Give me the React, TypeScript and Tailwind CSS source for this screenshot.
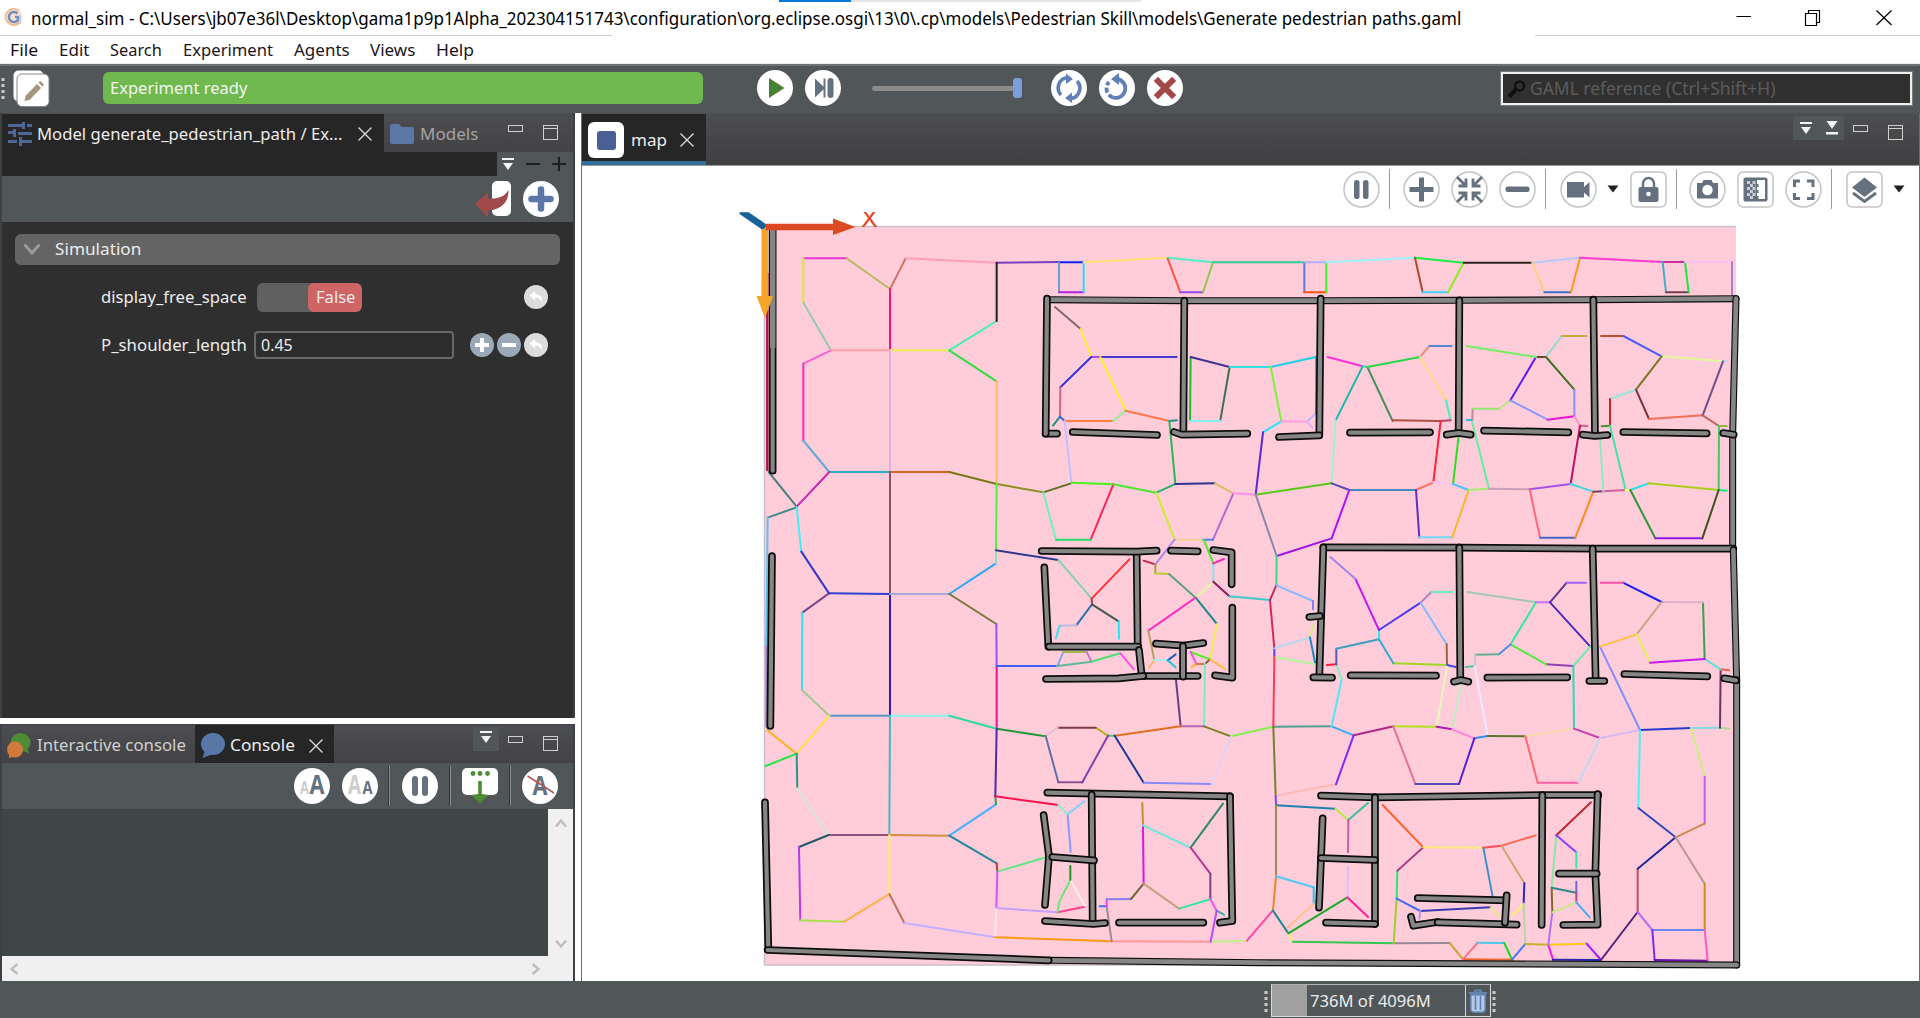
import { useLayoutEffect, useRef, type ReactNode } from "react";

/** Text condensed or widened so that it fills the width of its box. */
function Fit({ className = "", children }: { className?: string; children: string }) {
  const box = useRef<HTMLSpanElement>(null);
  const inner = useRef<HTMLSpanElement>(null);
  useLayoutEffect(() => {
    if (box.current && inner.current) {
      const s = box.current.clientWidth / inner.current.offsetWidth;
      inner.current.style.transform = `scaleX(${s})`;
    }
  }, []);
  return (
    <span ref={box} className={`block shrink-0 whitespace-nowrap leading-6 ${className}`}>
      <span ref={inner} className="inline-block origin-left">
        {children}
      </span>
    </span>
  );
}

function Round({ className = "", children }: { className?: string; children?: ReactNode }) {
  return (
    <span className={`block size-9 shrink-0 rounded-full bg-white ${className}`}>
      <svg viewBox="0 0 36 36" className="size-9 overflow-visible">
        {children}
      </svg>
    </span>
  );
}

function MapButton({ square, className = "", children }: { square?: boolean; className?: string; children?: ReactNode }) {
  return (
    <span className={`block size-[37px] shrink-0 ${className}`}>
      <svg viewBox="0 0 37 37" className="size-full" fill="#66717f">
        <rect x="1" y="1" width="35" height="35" rx={square ? 5 : 17.5} fill="#fff" stroke="#c4c4c4" strokeWidth="1.5" />
        {children}
      </svg>
    </span>
  );
}

function Cross({ className = "" }: { className?: string }) {
  return (
    <svg viewBox="0 0 14 14" className={`size-[14px] shrink-0 ${className}`}>
      <path d="M0.5 0.5 13.5 13.5M13.5 0.5 0.5 13.5" stroke="#d8d8d8" strokeWidth="1.4" />
    </svg>
  );
}

function MinIcon({ className = "" }: { className?: string }) {
  return <span className={`block h-[7px] w-[15px] shrink-0 border-[1.5px] border-[#cfcfcf] ${className}`} />;
}

function MaxIcon({ className = "" }: { className?: string }) {
  return (
    <span className={`block h-[15px] w-[15px] shrink-0 border-[1.5px] border-[#cfcfcf] ${className}`}>
      <span className="mt-[2px] block h-px bg-[#cfcfcf]" />
    </span>
  );
}

function MenuIcon({ className = "" }: { className?: string }) {
  return (
    <svg viewBox="0 0 14 14" className={`size-[14px] shrink-0 ${className}`} fill="#f4f4f4">
      <path d="M1 1h12v2H1zM2 6h10L7 13z" />
    </svg>
  );
}

function Grip({ className = "" }: { className?: string }) {
  return (
    <svg viewBox="0 0 4 22" className={`h-[22px] w-1 shrink-0 ${className}`} fill="#cfcabf">
      <path d="M0.5 1h3v3h-3zM0.5 7h3v3h-3zM0.5 13h3v3h-3zM0.5 19h3v3h-3z" />
    </svg>
  );
}

function Sep({ className = "" }: { className?: string }) {
  return <span className={`block h-10 w-[2px] shrink-0 border-l border-[#333839] bg-[#8a8d8f] ${className}`} />;
}

const undoPath = "M5.5 10.5 11 6v3c5 0 7.500 3 7 8.500-1-3.500-3-4.800-7-4.800v3z";

/* ------------------------------------------------------------------ */
/* Map contents: each sheet lists its segments in thirds of a pixel.   */
/* A wall that starts with "t" has a thin outline.                     */
/* ------------------------------------------------------------------ */

type Sheet = { x: number; y: number; paths: string; walls: string };

const sheets: Sheet[] = [
  {
    x: 740,
    y: 200,
    paths: `e23ad8 190,175 320,175|b9bb62 320,175 450,267|cf7468 450,267 497,175|ff9fb5 497,175 770,188|7a3fc0 770,188 957,186
d8e840 190,175 190,308|96c8ba 190,308 273,451|ff5fd0 273,451 190,491|f92fb8 190,491 190,722|5fa8d8 190,722 268,816
ff9fa8 273,451 450,451|ff1078 450,267 450,451|e8f050 450,451 628,451|40f0b8 628,451 770,363|202020 770,188 770,363
30dd40 628,451 770,544|ffbb60 770,544 770,852|e0b0e0 450,451 450,816|30aac0 268,816 450,816|d86820 450,816 628,816
7a7a18 628,816 770,852|8f8f28 770,852 910,877|5f6f20 910,877 993,850|c828b0 268,816 170,920|508080 86,816 170,920`,
    walls: `98,84 98,812`,
  },
  {
    x: 1030,
    y: 230,
    paths: `1020f0 87,97 161,97|6a9ed0 87,97 87,187|b020e0 87,187 161,187|20e0f8 161,97 161,187|ffdd70 161,97 413,83
50eec0 413,83 548,97|ff5548 413,86 451,187|9048f0 451,187 519,187|90c850 519,187 549,97|30cc98 549,97 823,97
5878e0 823,97 823,187|ff5010 823,187 889,187|40f030 889,97 889,187|b0b0ff 823,97 889,97|a0f0f8 889,97 1155,83
806a70 75,231 152,297|f8f030 152,297 184,381|c040f0 184,381 211,381|4838d0 211,381 440,381|f8f028 211,381 287,542
3830e0 184,381 91,472|d06090 91,472 90,560|209088 90,560 69,587|4060d0 90,560 104,573|ff8040 104,573 250,573
90f090 250,573 287,542|ff7848 287,542 418,573|209090 418,573 441,571|28b858 418,573 436,760|c0c0ff 104,573 124,758
18c030 482,381 480,573|403090 482,381 599,411|407050 599,411 571,571|80f0f0 480,573 571,573|30e0e0 599,411 722,411
18d0e8 722,411 858,381|80f040 722,411 754,574|20e8f8 754,574 699,607|ffa0e0 754,574 831,575|c0b8ff 831,575 858,550
e0b0ff 831,575 847,593|40a0e0 858,381 858,550|5828d8 699,607 677,794|ff30d8 893,381 998,409|18b8a8 998,409 917,571
40d0c0 998,409 1012,411|489058 1012,411 1088,573|28d848 1012,411 1170,381|a0f0d0 917,571 905,760|48f020 124,758 250,763
f82858 250,763 182,929|70f0b8 40,787 78,929|28dd68 78,929 182,929|48e830 250,763 379,788|30b070 379,788 436,762
303090 436,762 555,760|d8c060 555,760 610,790|b868c8 610,790 549,929|c8f030 379,788 434,929|f0d090 434,929 520,929
5080f0 520,929 549,929|ff90e8 610,790 677,794|58c818 677,794 905,760|5848b0 905,760 958,780|4888c0 958,780 1158,780
b010f8 958,780 905,925|9f14e4 905,925 740,978|8888a8 677,794 740,978`,
    walls: `t56,209 463,212 872,212 1290,211|t1290,211 1690,209 2118,206|47,611 81,611|51,206 47,611|463,212 460,605|872,206 868,614|128,606 381,615|432,606 455,614 652,611|747,621 868,616`,
  },
  {
    x: 1380,
    y: 230,
    paths: `18f040 105,83 251,98|b04828 105,83 128,187|40d0f8 128,187 204,187|88f020 204,187 251,98|302020 251,98 457,98
b8c8ff 457,98 600,83|ffcc80 457,98 493,187|3870c8 493,187 573,187|ff9818 573,187 600,83|ff38d0 600,83 848,96
c83098 848,96 915,96|40b0c0 848,96 858,187|704050 858,187 926,187|18e840 915,96 926,187|ffc0f0 915,96 1056,96
a880c8 1056,96 1056,200|e89080 120,381 148,348|5888d0 148,348 215,348|ffd880 120,381 198,511|40f0c0 198,511 212,571
b05040 38,571 182,573|c04060 182,573 212,571|ff2040 182,573 160,757|ff7060 160,757 108,780|ffc0f0 160,757 219,762
28e020 219,762 237,610|50c0f8 219,762 266,780|6030c0 108,780 118,922|70d8f8 118,922 217,922|f8b828 217,922 266,780
a0f070 266,780 327,776|60f0a0 327,776 275,570|20c0e0 260,570 277,570|c08898 277,570 278,536|90e870 278,536 359,536
b8e880 359,536 391,511|6018f8 391,511 468,381|704040 468,381 498,381|70f060 260,348 468,381|90d8d0 498,381 545,318
c0b040 545,318 620,318|407028 498,381 583,479|8890ff 583,479 583,557|8898ff 391,511 503,569|e818d8 503,569 583,559
ff90d8 583,559 600,587|d06090 600,587 622,588|c01068 600,587 572,762|c8a0b8 327,776 449,778|a850e8 449,778 572,762
40d8e0 572,762 640,785|ff6878 449,778 480,923|4868c8 480,923 586,923|ff8820 586,923 640,785|803868 640,785 670,784
d060a0 670,784 737,780|90e8c0 670,784 660,620|b85030 663,318 730,318|4860f8 730,318 845,379|e0f8a0 845,379 1029,394
c0d0ff 1029,394 1042,394|787828 845,379 768,479|90e8d8 768,479 690,507|c02820 690,507 690,587|509030 665,589 690,587
40e0b0 690,587 737,780|803038 768,479 807,567|f07058 807,567 968,556|705088 968,556 1029,394|c06060 968,556 1017,588
90b840 1017,588 1040,588|48c860 1017,588 1016,780|10f080 1016,780 1040,782|ffff60 737,780 751,780|28e0e8 751,780 806,760
a8d018 806,760 1016,780|309838 751,780 826,925|9018f0 826,925 967,925|405020 967,925 1016,780`,
    walls: `t1068,206 1058,612 1058,945|238,211 236,605|640,209 645,612|-90,608 150,607|200,614 236,609 272,614|312,602 565,607|608,614 645,618 682,615|730,606 980,610|1030,609 1061,614`,
  },
  {
    x: 740,
    y: 460,
    paths: `408888 83,173 170,142|60c0f0 83,173 79,560|a080c0 79,560 79,800|40f0f8 170,142 184,275|3838c8 184,275 267,400
784890 267,400 187,458|30e0f0 187,458 186,690|a0c890 186,690 268,767|3040d0 267,400 450,402|5898c8 268,767 450,767
905070 450,36 450,402|3020b8 450,402 450,767|a8a8d8 450,402 628,402|28a8f8 628,402 768,310|90e0b8 768,310 768,271
50f040 768,271 770,72|787838 628,402 769,492|9058f8 769,492 770,618|f01090 770,618 770,806|4060f8 770,618 952,618
80f8f0 450,767 628,767|30d8a0 628,767 770,806|209838 770,806 916,829|303890 768,271 955,300|88d0b0 955,300 1055,416
ff3030 1055,416 1168,298|c03050 1055,416 1056,433|3070a8 1056,433 1009,496|c0b8e0 1009,496 959,497|40e0f0 959,497 947,536
405850 1056,433 1136,484|20e8f8 1136,484 1137,536|88a8e8 952,618 970,576|a0b850 970,576 1040,576|c878c0 1040,576 1055,605
60b898 952,618 1055,605|48e070 1055,605 1141,580|ff50e8 1141,580 1182,628|c82050 1211,302 1246,313|b088e8 1246,313 1304,239
a8a040 1246,313 1246,340|b8d030 1246,340 1287,342|60a080 1287,342 1367,413|e0f8a0 1367,413 1420,365|90e0e8 1420,365 1420,310
50e830 1420,310 1391,239|ff20c0 1420,310 1452,297|901860 1420,365 1468,409|40c8c8 1468,409 1590,420|208888 1367,413 1431,492
ff30c0 1367,413 1225,512|b8a060 1225,512 1243,600|ffb860 1243,600 1227,624|a8f0e8 1243,600 1283,601|2858c0 1283,601 1307,583
20c0e0 1283,601 1307,622|e8f050 1431,492 1410,598|50f020 1410,598 1352,576|ff50e0 1352,576 1369,612|ffb040 1369,612 1355,622
e07840 1369,612 1395,612|806040 1395,612 1410,598|ffb840 1410,598 1456,627|70f0c8 1395,612 1392,799|684080 1307,650 1322,799
b868b8 1322,799 1392,799|e07020 1322,799 1125,827|788020 1392,799 1473,829|80f050 1473,829 1600,800|40c880 1125,827 1104,827
c0b020 1104,827 1067,803|803848 1067,803 953,803|e0c0d0 953,803 916,829`,
    walls: `96,288 91,798|1190,283 1193,560|905,273 1190,275 1250,272|1293,272 1373,274|1420,270 1475,277 1475,373|913,322 925,560|927,560 1195,560|1197,570 1205,645|1210,648 1373,648|918,657 1135,655 1210,648|1248,551 1330,557 1390,549|1329,558 1329,650|1477,443 1477,653 1425,646`,
  },
  {
    x: 1020,
    y: 520,
    paths: `40d888 770,108 769,196|b83060 769,196 750,240|88b8ff 769,196 879,243|8080f0 879,243 879,268|d02868 750,240 763,385
5040f8 763,385 763,411|b0d8f0 763,385 870,352|d0f080 870,352 880,313|2088c0 870,352 886,432|b0f898 763,411 886,433
ff3858 763,411 760,620|50a090 760,620 935,619|788028 760,620 767,827|ffb8b8 767,827 948,793|38a8f0 935,619 1001,646
8828f8 1001,646 948,793|b02888 1001,646 1121,619|50e8f8 935,619 965,478|80f0c0 965,478 949,433|f81840 921,435 949,433
5858b0 949,433 949,386|38a0c0 949,386 1077,358|30e8f0 1077,358 1077,330|c818f0 1077,330 1006,176|a088e8 1006,176 931,111
6070a8 77,648 115,787|905098 115,787 187,787|8840a8 187,787 264,647|203898 284,647 371,788|8888f8 371,788 575,792
e0d0f8 575,792 633,649`,
    walls: `910,82 1318,83|1318,83 1718,86 2140,86|910,82 898,465|868,291 900,288|880,472 936,473|992,466 1248,467`,
  },
  {
    x: 1370,
    y: 520,
    paths: `5038f0 27,330 152,248|b080c8 152,248 184,216|68e8c0 184,216 247,216|88b8ff 152,248 230,373|906840 230,373 231,435
a0d820 231,435 70,430|38a8d0 70,430 27,358|4848e0 231,435 257,441|e8f8b8 231,440 200,620|a0c8b0 292,216 498,247
30e8a0 498,247 422,373|d070f8 498,247 540,247|603888 540,247 590,188|a060f8 590,188 648,188|5028c0 540,247 661,380
70e8a8 661,380 610,438|9040b0 610,438 528,433|58e840 528,433 422,373|5888f0 422,373 387,403|60b098 387,403 316,404
c0c8d0 316,404 314,438|50c8a0 288,441 314,438|f0e8ff 314,438 353,648|b8f0b8 273,495 246,628|b0e020 70,619 200,620
b020b0 200,620 246,628|ff80d8 246,628 313,655|3090f0 313,655 353,648|587830 353,648 466,649|f8d8b0 466,649 610,626
30d8b8 610,438 612,626|c840b0 612,626 690,654|d8b8f0 690,654 810,630|8090ff 690,380 810,630|2838d0 810,630 963,624
80d8e0 963,624 1050,623|b0d890 1050,623 1077,626|703068 1052,448 1050,623|f06040 1052,448 1077,451|60e0e0 1052,448 1004,417
38a050 1004,417 999,247|e0b0c8 999,247 875,246|2020f0 875,246 759,188|ff50a8 759,188 692,188|d0a088 875,246 800,343
ffc040 800,343 690,380|e0f050 800,343 840,428|c818f0 840,428 1004,417|e87098 70,619 136,792|5050b8 136,792 267,792
5820e0 267,792 313,655|ff6870 466,649 503,788|ff60a0 503,788 626,788|c0d8f0 626,788 690,654|48f0f8 810,630 805,864
c8f080 963,624 1004,770|c058f8 1004,770 1004,911`,
    walls: `268,83 271,478|668,86 677,478|252,485 273,480 295,485|352,473 592,472|658,483 703,483|763,462 1012,469|t1090,90 1100,480|t1100,480 1100,1335|1063,475 1098,481`,
  },
  {
    x: 740,
    y: 720,
    paths: `ffb020 81,30 170,101|ffe040 170,101 268,-13|20e840 77,138 170,101|309088 170,101 172,205|d0e8d8 172,205 266,345
48b8b8 450,-13 448,345|905078 266,345 448,345|d09040 448,345 628,347|48b0ff 628,347 768,253|30a060 768,253 766,229
5028a8 770,26 766,229|f81050 766,229 955,255|208898 628,347 770,430|b04040 770,430 772,455|60e880 772,455 918,412
d850f8 772,455 769,564|ffe8f0 769,564 766,652|c8a0f8 769,564 953,577|ff4098 953,577 1034,560|68e870 953,577 958,545 991,480
fff0f0 991,480 1035,557|189820 991,438 991,480|8898ff 983,283 992,395|90e8d0 955,255 983,283|80d0f8 983,283 1034,243
285868 266,345 177,381|b838f0 177,381 181,601|a8e050 181,601 313,605|ffb040 313,605 448,522|fff068 448,345 448,522
c07060 448,522 493,609|c0b0ff 493,609 766,652|ff9818 766,652 1115,664|ff9898 1115,664 1412,665|c0f088 1412,665 1521,662
ff48a8 1521,662 1598,572|a08898 1115,664 1100,559|3878f8 1079,559 1100,559|ff40e8 1100,559 1100,538|8080f0 1100,538 1173,537
706838 1173,537 1211,491|d818d8 1211,491 1209,316|c09030 1209,316 1207,249|68e8d8 1209,316 1352,383|308870 1352,383 1449,251
b83898 1352,383 1411,461|804078 1411,461 1411,538|30e8a0 1411,538 1317,566|c8a080 1317,566 1211,491|ff50e8 1411,538 1430,572
40b0a8 1430,572 1452,584|b848f8 1430,572 1412,665`,
    walls: `75,247 85,688|t926,721 1560,728 2990,735|83,690 926,721|922,218 1470,229|1470,229 1477,603 1440,608|1055,224 1058,600|911,285 927,408 915,555|937,411 1062,421|915,603 1060,612 1095,609|1137,608 1390,608`,
  },
  {
    x: 1240,
    y: 720,
    paths: `7848f8 107,227 108,256|2080b0 108,256 286,266|b8e840 286,266 325,300|38c0a0 325,300 384,249|c860a8 325,300 324,397
a08850 108,256 108,469|e88828 108,469 99,572|50c8f8 108,469 221,502|38c0e8 221,502 221,552|ffc090 221,552 137,627
208890 99,572 145,640|f8f070 145,640 158,665|20a828 145,640 322,532|d8c0f8 322,532 324,440|ff2098 322,532 384,591
30c850 158,665 461,670|988898 461,670 629,669|a0d030 461,670 470,536|30e078 470,536 472,452|a84088 472,452 550,382
ff6028 550,382 428,255|ffe880 550,382 730,383|ff4858 730,383 785,377|ff6850 785,377 887,346|4090c8 730,383 758,530
d8a070 785,377 853,490|2828c8 853,490 851,551|f8f860 851,551 819,586|b0d8a8 851,551 856,672|4868f8 470,536 541,573
3838b0 541,573 752,562|b098f0 541,573 538,596|e0e880 752,562 774,587|d0a030 629,669 669,718|f06830 669,718 816,719
ff7088 669,718 713,668|48c8e8 713,668 793,669|18d820 793,669 816,719|4878f0 816,719 856,672|c8b030 856,672 925,674
ffc818 925,674 1040,671|f818e8 925,674 939,719|2828b0 939,719 1083,720|a818f8 1040,671 1083,720|b070f8 925,674 937,577
806828 937,577 935,503|88e8a0 935,503 949,346|c02830 949,346 1053,247|9838f8 949,346 1009,397|38e8b0 1009,397 1009,443
308888 935,503 1009,518|7068d8 1009,485 1009,518|b04890 1009,518 1009,547|c8e880 1009,547 937,577|48a8f8 1009,547 1049,592
582078 1083,720 1193,576|b85060 1193,576 1193,446|2028a0 1193,446 1307,352|3048b8 1307,352 1195,264|d08850 1307,352 1393,311
b89890 1307,352 1394,491|c89010 1394,491 1394,630|c068f8 1193,576 1237,630|6888f8 1237,630 1394,630|8028e8 1237,630 1244,720
7010b0 1244,720 1403,722|ff58c0 1394,630 1403,722`,
    walls: `243,227 405,232|405,232 905,225 1075,225|405,232 405,612|258,608 405,612|248,295 237,563|243,414 405,420|907,225 905,615|1073,222 1066,460 1073,614 970,615|957,461 1070,461|533,534 798,541|513,590 520,617 593,606|593,607 830,614|800,526 795,608`,
  },
];

function Wall({ spec }: { spec: string }) {
  const thin = spec.startsWith("t");
  const points = thin ? spec.slice(1) : spec;
  return (
    <g>
      <polyline points={points} stroke="#0c0c0c" strokeWidth={thin ? 21 : 23} />
      <polyline points={points} stroke="#868686" strokeWidth={thin ? 14 : 12.5} />
    </g>
  );
}

function FloorMap() {
  return (
    <svg viewBox="582 166 1337 814" className="col-start-1 row-start-1 h-[814px] w-[1337px]">
      <rect x="764.5" y="226.500" width="971.500" height="738.500" fill="#ffcdd9" />
      <path d="M1736 226.500H764.500V965H1400" fill="none" stroke="#c9bfc9" strokeWidth="1.500" />
      {sheets.map((s, i) => (
        <g key={i} transform={`translate(${s.x} ${s.y}) scale(0.33333)`} fill="none" strokeLinecap="round">
          {s.paths.split(/[|\n]/).map((p, j) => {
            const at = p.indexOf(" ");
            return <polyline key={j} points={p.slice(at + 1)} stroke={"#" + p.slice(0, at)} strokeWidth="6" strokeLinejoin="round" />;
          })}
        </g>
      ))}
      <path d="M767.300 273V471" stroke="#b5104e" strokeWidth="2.400" />
      {sheets.map((s, i) => (
        <g key={i} transform={`translate(${s.x} ${s.y}) scale(0.33333)`} fill="none" strokeLinecap="round" strokeLinejoin="round">
          {s.walls.split("|").map((w, j) => (
            <Wall key={j} spec={w} />
          ))}
        </g>
      ))}
      <path d="M772.700 229V348" stroke="#868686" strokeWidth="5.500" />
      <path d="M741 211 765 227.500" stroke="#17629a" strokeWidth="6.500" />
      <path d="M764.700 229V298" stroke="#f5a628" strokeWidth="6.500" />
      <path d="M756.500 296h16.500l-8 22z" fill="#f5a628" />
      <path d="M765.500 227H836" stroke="#dc4a22" strokeWidth="6.500" />
      <path d="M833 218.500 855.500 227 833 235z" fill="#dc4a22" />
      <path d="M735 200h20v12.200h-20z" fill="#fff" />
      <clipPath id="axisLabel">
        <path d="M850 212h40v30h-40z" />
      </clipPath>
      <g clipPath="url(#axisLabel)">
        <text x="861" y="227.200" fontSize="23" fontWeight="400" fontFamily="Inter, sans-serif" fill="#dc4a22" textLength="17" lengthAdjust="spacingAndGlyphs">
          X
        </text>
      </g>
    </svg>
  );
}

function MapToolbar() {
  return (
    <div className="col-start-1 row-start-1 flex h-[46px] items-center self-start pl-[761px]">
      <MapButton>
        <rect x="11" y="9" width="5.500" height="19" rx="2.500" />
        <rect x="20" y="9" width="5.500" height="19" rx="2.500" />
      </MapButton>
      <span className="ml-[9px] h-10 w-px bg-[#9a9a9a]" />
      <MapButton className="ml-[13px]">
        <path d="M16 6.500h5V16h9.500v5H21v9.500h-5V21H6.500v-5H16z" />
      </MapButton>
      <MapButton className="ml-[11px]">
        <path
          d="M6 6l9 9M15 7.500V15H7.500M31 6l-9 9M22 7.500V15h7.500M6 31l9-9M7.500 22H15v7.500M31 31l-9-9M29.500 22H22v7.500"
          fill="none"
          stroke="#66717f"
          strokeWidth="2.800"
        />
      </MapButton>
      <MapButton className="ml-[11px]">
        <rect x="6.500" y="15.500" width="24" height="5.500" rx="2" />
      </MapButton>
      <span className="ml-[9px] h-10 w-px bg-[#9a9a9a]" />
      <MapButton className="ml-[14px]">
        <path d="M7 11h17v5l5.500-5v15.500L24 21.500v5H7z" />
      </MapButton>
      <svg viewBox="0 0 12 8" className="ml-[10px] h-2 w-3">
        <path d="M0.500 0.500h11L6 7.500z" fill="#222" />
      </svg>
      <MapButton square className="ml-[11px]">
        <rect x="8.500" y="16" width="20" height="15" rx="2" />
        <path d="M13 17v-4.500a5.500 5.500 0 0 1 11 0V17" fill="none" stroke="#66717f" strokeWidth="2.400" />
        <circle cx="18.500" cy="23" r="2.300" fill="#fff" />
      </MapButton>
      <span className="ml-[9px] h-10 w-px bg-[#9a9a9a]" />
      <MapButton className="ml-[12px]">
        <path d="M8 12h5l1.500-3h8l1.500 3h5v15.500H8z" />
        <circle cx="18.500" cy="19" r="5.200" fill="#fff" />
      </MapButton>
      <MapButton square className="ml-[11px]">
        <rect x="6.500" y="6.500" width="24" height="24" rx="2" />
        <path d="M20 9h8v19h-8z" fill="#fff" />
        <path
          d="M10 10h3v3h-3zM15.500 10h3v3h-3zM13 13h3v3h-3zM18 13h3v3h-3zM10 16h3v3h-3zM15.500 16h3v3h-3zM13 19h3v3h-3zM18 19h3v3h-3zM10 22h3v3h-3zM15.500 22h3v3h-3zM13 25h3v3h-3z"
          fill="#c9ced3"
        />
        <path d="M18.500 13h3v3h-3zM18.500 19h3v3h-3zM18.500 25h3v3h-3z" />
      </MapButton>
      <MapButton className="ml-[11px]">
        <path d="M9.500 16V10H15M22 10h6v6M28 22v5.500h-6M15 27.500H9.500V22" fill="none" stroke="#66717f" strokeWidth="3" />
      </MapButton>
      <span className="ml-[9px] h-10 w-px bg-[#9a9a9a]" />
      <MapButton square className="ml-[14px]">
        <path d="M18.500 6.500 31 16.500 18.500 26 6 16.500z" />
        <path d="M7 22 18.500 30.500 30 22" fill="none" stroke="#66717f" strokeWidth="2.800" />
      </MapButton>
      <svg viewBox="0 0 12 8" className="ml-[10px] h-2 w-3">
        <path d="M0.500 0.500h11L6 7.500z" fill="#222" />
      </svg>
    </div>
  );
}

function TitleBar() {
  return (
    <>
      <div className="flex h-[2px] pl-[779px]">
        <span className="w-[72px] bg-[#0078d7]" />
        <span className="w-[290px] bg-[#e5e5e5]" />
      </div>
      <div className="flex h-[33px] items-center">
        <svg viewBox="0 0 20 20" className="mb-1 ml-1 size-5">
          <circle cx="10" cy="10" r="8.500" fill="#fbe3cf" />
          <path d="M15 4A8 8 0 1 0 17 13" fill="none" stroke="#eebd94" strokeWidth="2" />
          <path d="M13.500 6.500A5 5 0 1 0 14 13v-3h-3" fill="none" stroke="#6f8fbd" strokeWidth="2.500" />
          <path d="M16 8v9" stroke="#c3cfe2" strokeWidth="2" />
        </svg>
        <Fit className="mb-[2px] ml-[7px] w-[1430px] text-[17.5px] text-black">
          {"normal_sim - C:\\Users\\jb07e36l\\Desktop\\gama1p9p1Alpha_202304151743\\configuration\\org.eclipse.osgi\\13\\0\\.cp\\models\\Pedestrian Skill\\models\\Generate pedestrian paths.gaml"}
        </Fit>
        <svg viewBox="0 0 160 24" className="mb-[5px] ml-[272px] h-6 w-40" fill="none" stroke="#000" strokeWidth="1.200">
          <path d="M3.500 12.500H18M72.500 9.500h11v12h-11zM75.500 9V6.500h11v12h-3M143.500 6.500l15 14.500M158.500 6.500l-15 14.500" />
        </svg>
      </div>
      <div className="flex h-px justify-between">
        <span className="w-[612px] bg-[#cfcfcf]" />
        <span className="w-[385px] bg-[#cfcfcf]" />
      </div>
      <div className="flex h-7 items-center border-b border-[#ececec] pl-[10px] text-[17px] text-[#1b1420]">
        <Fit className="w-[28px]">File</Fit>
        <Fit className="ml-[21px] w-[30px]">Edit</Fit>
        <Fit className="ml-[21px] w-[52px]">Search</Fit>
        <Fit className="ml-[21px] w-[90px]">Experiment</Fit>
        <Fit className="ml-[21px] w-[56px]">Agents</Fit>
        <Fit className="ml-[20px] w-[45px]">Views</Fit>
        <Fit className="ml-[21px] w-[38px]">Help</Fit>
      </div>
    </>
  );
}

function MainToolbar() {
  return (
    <div className="flex h-[49px] items-center border-t-2 border-[#6f7375] pb-[3px]">
      <Grip className="ml-px" />
      <svg viewBox="0 0 37 37" className="ml-2 size-[37px]">
        <rect x="0.500" y="0.500" width="30" height="31" rx="5" fill="#fff" />
        <rect x="4" y="4" width="32" height="32.500" rx="5" fill="#fff" stroke="#858889" strokeWidth="1" />
        <path d="M11.500 31l1-5L24 14l4 4-11.500 12zM25.500 12.500l2-1.500 3.500 3.500-1.700 2z" fill="#a5937c" />
      </svg>
      <div className="ml-[53px] flex h-8 w-[600px] items-center rounded-md bg-[#70b94e] pl-[7px] text-[17px] text-[#f4f4f4]">
        <Fit className="w-[137px]">Experiment ready</Fit>
      </div>
      <Round className="ml-[54px]">
        <path d="M12 8l15.500 10L12 28z" fill="#478232" />
      </Round>
      <Round className="ml-3">
        <path d="M10 8.500 20 18 10 27.500z" fill="#66717f" />
        <rect x="18.500" y="8.500" width="2" height="19" fill="#66717f" />
        <rect x="22.500" y="8" width="6" height="20" rx="3" fill="#66717f" />
      </Round>
      <span className="ml-[31px] h-[5px] w-[141px] rounded-l-full bg-[#8b8b89]" />
      <span className="h-5 w-[9px] rounded-[3px] bg-[#7b9edb]" />
      <Round className="ml-[29px]">
        <path d="M20 28.500A10.500 10.500 0 0 0 26 11M16 7.500A10.500 10.500 0 0 0 10 25" fill="none" stroke="#5f7fb5" strokeWidth="3.600" />
        <path d="M15 3.500 22 9l-7 5zM21 22.500 14 28l7 5z" fill="#5f7fb5" />
      </Round>
      <Round className="ml-3">
        <path d="M18 9A9.500 9.500 0 1 1 14 27.500" fill="none" stroke="#5f7fb5" strokeWidth="3.800" />
        <path d="M14 27.500A9.500 9.500 0 0 1 10 12" fill="none" stroke="#5f7fb5" strokeWidth="3.800" strokeDasharray="5 2.500" />
        <path d="M20 3v12l-8-6z" fill="#5f7fb5" />
      </Round>
      <Round className="ml-3">
        <path d="M11 11 25 25M25 11 11 25" stroke="#a34848" strokeWidth="6" strokeLinecap="square" />
      </Round>
      <div className="ml-[318px] mt-px flex h-[33px] w-[411px] items-center border-2 border-[#f0f0ee] bg-[#303030] text-[17.5px] text-[#5c5c5c] outline outline-1 outline-[#777b7c]">
        <svg viewBox="0 0 20 20" className="ml-1 size-5 shrink-0" fill="none" stroke="#111">
          <circle cx="12.500" cy="7" r="4.500" strokeWidth="2.600" />
          <path d="M9 10.500 2 17.500" strokeWidth="4" />
        </svg>
        <Fit className="mb-px ml-[3px] w-[245px]">GAML reference (Ctrl+Shift+H)</Fit>
      </div>
    </div>
  );
}

function ParametersPanel() {
  return (
    <section className="flex h-[605px] flex-col border-x-2 border-[#3d4044] bg-[#2f2f2f]">
      <div className="flex h-[39px] items-center bg-linear-to-b from-[#4d4e51] to-[#434246] pt-px">
        <div className="flex h-full w-[382px] items-center bg-[#262626] pt-[2px] text-[17px] text-[#ececec]">
          <svg viewBox="0 0 24 24" className="ml-[6px] size-6" fill="#4e6796">
            <path d="M0 2h14V0h3v7h-3V5H0zM19 2h5v3h-5zM0 9h5V7h3v8H5v-3H0zM10 10h14v3H10zM0 18h9v3H0zM11 15h3v3h10v3H14v3h-3z" />
          </svg>
          <Fit className="ml-[5px] w-[305px]">Model generate_pedestrian_path / Ex...</Fit>
          <Cross className="ml-4" />
        </div>
        <svg viewBox="0 0 24 20" className="ml-[6px] mt-[2px] h-5 w-6" fill="#5b77a6">
          <path d="M0 2Q0 0 2 0h7l2.500 3H22q2 0 2 2v13q0 2-2 2H2q-2 0-2-2z" />
        </svg>
        <Fit className="ml-[6px] mt-[2px] w-[58px] text-[17px] text-[#a3a3a3]">Models</Fit>
        <MinIcon className="mb-[9px] ml-[30px]" />
        <MaxIcon className="mb-px ml-[20px]" />
      </div>
      <div className="flex h-6 items-center bg-[#515658]">
        <span className="h-full w-[495px] bg-[#262626]" />
        <MenuIcon className="ml-1" />
        <span className="ml-[11px] h-[2px] w-[14px] bg-[#1d1f20]" />
        <svg viewBox="0 0 14 14" className="ml-3 size-[14px]">
          <path d="M0 7h14M7 0v14" stroke="#1d1f20" strokeWidth="2" />
        </svg>
      </div>
      <div className="flex h-[46px] items-center justify-end bg-[#515658] pr-[14px]">
        <svg viewBox="0 0 36 36" className="size-9">
          <rect x="17" y="0" width="19" height="35" rx="5" fill="#fff" />
          <path d="M0 23 13 11v6.500c9 .5 16-1 20.500-8.500.5 12-7 20-20.500 20.500v7z" fill="#a14a4b" />
        </svg>
        <Round className="ml-3">
          <path d="M18 8.500v19M8.500 18h19" stroke="#5a77a8" strokeWidth="6.500" strokeLinecap="round" />
        </Round>
      </div>
      <div className="mx-[13px] mt-3 flex h-[31px] w-[545px] items-center rounded-md bg-[#646464] pb-px text-[17px] text-[#ececec]">
        <svg viewBox="0 0 18 12" className="ml-2 h-3 w-[18px]">
          <path d="M1.500 1.500 9 10l7.500-8.500" fill="none" stroke="#9c9c9c" strokeWidth="3" />
        </svg>
        <Fit className="ml-[14px] w-[86px]">Simulation</Fit>
      </div>
      <div className="mt-[17px] flex h-[30px] items-center pl-[99px] text-[17px] text-[#ececec]">
        <Fit className="w-[146px]">display_free_space</Fit>
        <div className="ml-[10px] flex h-[29px] w-[105px] justify-end overflow-hidden rounded-md bg-[#606060]">
          <div className="flex w-[54px] items-center justify-center rounded-md bg-[#cf6464] pb-px">
            <Fit className="w-[39px]">False</Fit>
          </div>
        </div>
        <svg viewBox="0 0 24 24" className="ml-[162px] size-6">
          <circle cx="12" cy="12" r="12" fill="#dcdcdc" />
          <path d={undoPath} fill="#fff" />
        </svg>
      </div>
      <div className="mt-[18px] flex h-[30px] items-center pl-[99px] text-[17px] text-[#ececec]">
        <Fit className="w-[146px]">P_shoulder_length</Fit>
        <div className="ml-[7px] flex h-7 w-[200px] items-center rounded-[4px] border-2 border-[#686868] bg-[#2d2d2d] pl-[5px]">
          <Fit className="w-[32px]">0.45</Fit>
        </div>
        <svg viewBox="0 0 78 24" className="ml-4 h-6 w-[78px]">
          <circle cx="12" cy="12" r="12" fill="#9aa8b7" />
          <circle cx="39" cy="12" r="12" fill="#9aa8b7" />
          <circle cx="66" cy="12" r="12" fill="#dcdcdc" />
          <path d="M12 5v14M5 12h14M32 12h14" stroke="#fff" strokeWidth="4" />
          <path d={undoPath} transform="translate(54 0)" fill="#fff" />
        </svg>
      </div>
    </section>
  );
}

function ConsolePanel() {
  return (
    <section className="mt-[6px] flex h-[257px] flex-col border-x-2 border-t border-[#3d4044]">
      <div className="flex h-[38px] bg-linear-to-b from-[#4d4e51] to-[#434246] text-[17px] text-[#d0d0d0]">
        <svg viewBox="0 0 24 26" className="ml-[5px] mt-[8px] h-[26px] w-6">
          <ellipse cx="13.500" cy="9.500" rx="10" ry="9.500" fill="#4f8a34" />
          <path d="M15 17l7 4-2-8z" fill="#4f8a34" />
          <circle cx="8" cy="16.500" r="8" fill="#d27a3c" />
          <path d="M2 19v6l8-2z" fill="#d27a3c" />
        </svg>
        <Fit className="ml-[6px] mt-[8px] w-[149px]">Interactive console</Fit>
        <div className="ml-[9px] flex w-[139px] bg-[#262626] text-[#ececec]">
          <svg viewBox="0 0 24 26" className="ml-[6px] mt-[8px] h-[26px] w-6" fill="#5876a6">
            <ellipse cx="12" cy="11" rx="12" ry="11" />
            <path d="M4 17 1.500 25 12 21z" />
          </svg>
          <Fit className="ml-[5px] mt-[8px] w-[65px]">Console</Fit>
          <Cross className="ml-[14px] mt-[14px]" />
        </div>
        <span className="ml-[139px] mt-[2px] flex h-6 w-[26px] items-center justify-center bg-[#515658]">
          <MenuIcon className="mb-1" />
        </span>
        <MinIcon className="ml-[9px] mt-[11px]" />
        <MaxIcon className="ml-[20px] mt-[11px]" />
      </div>
      <div className="flex h-[46px] items-center bg-[#515658] pl-[292px]">
        <Round>
          <g fontFamily="Open Sans, sans-serif" fontWeight="700">
            <text x="6" y="26" fontSize="17" fill="#cdcdcd" textLength="9" lengthAdjust="spacingAndGlyphs">A</text>
            <text x="15.500" y="26" fontSize="26" fill="#66717f" textLength="15" lengthAdjust="spacingAndGlyphs">A</text>
          </g>
        </Round>
        <Round className="ml-3">
          <g fontFamily="Open Sans, sans-serif" fontWeight="700">
            <text x="6" y="26" fontSize="26" fill="#cdcdcd" textLength="13" lengthAdjust="spacingAndGlyphs">A</text>
            <text x="20.500" y="26" fontSize="17" fill="#66717f" textLength="10" lengthAdjust="spacingAndGlyphs">A</text>
          </g>
        </Round>
        <Sep className="ml-[10px]" />
        <Round className="ml-3">
          <rect x="10" y="8" width="6" height="20" rx="3" fill="#66717f" />
          <rect x="20" y="8" width="6" height="20" rx="3" fill="#66717f" />
        </Round>
        <Sep className="ml-[11px]" />
        <svg viewBox="0 0 36 36" className="ml-[11px] size-9">
          <rect width="36" height="27" rx="5" fill="#fff" />
          <path d="M16.200 13h3.600v13l7 1-8.800 8.500L9.200 27l7-1z" fill="#4f8a34" />
          <g fill="#4f8a34">
            <circle cx="11" cy="5.500" r="2.400" />
            <circle cx="18" cy="5.500" r="2.400" />
            <circle cx="25.500" cy="5.500" r="2.400" />
          </g>
        </svg>
        <Sep className="ml-[11px]" />
        <Round className="ml-[11px]">
          <text x="10.500" y="26.500" fontSize="26" fontFamily="Open Sans, sans-serif" fontWeight="700" fill="#66717f" textLength="15" lengthAdjust="spacingAndGlyphs">A</text>
          <path d="M5.500 8 32 25" stroke="#b55454" strokeWidth="1.500" />
        </Round>
      </div>
      <div className="flex h-[147px]">
        <div className="flex-1 bg-[#404547]" />
        <div className="flex w-[25px] flex-col items-center justify-between bg-[#f0f0f0] pb-[7px] pt-[9px]">
          <svg viewBox="0 0 12 10" className="h-[10px] w-3">
            <path d="M1 8.500 6 2.500l5 6" fill="none" stroke="#bdbdbd" strokeWidth="2.400" />
          </svg>
          <svg viewBox="0 0 12 10" className="h-[10px] w-3">
            <path d="M1 1.500 6 7.500l5-6" fill="none" stroke="#bdbdbd" strokeWidth="2.400" />
          </svg>
        </div>
      </div>
      <div className="flex h-[25px] items-center justify-between bg-[#f0f0f0] pl-[7px] pr-[32px]">
        <svg viewBox="0 0 10 12" className="h-3 w-[10px]">
          <path d="M8.500 1 2.500 6l6 5" fill="none" stroke="#bdbdbd" strokeWidth="2.400" />
        </svg>
        <svg viewBox="0 0 10 12" className="h-3 w-[10px]">
          <path d="M1.500 1 7.500 6l-6 5" fill="none" stroke="#bdbdbd" strokeWidth="2.400" />
        </svg>
      </div>
    </section>
  );
}

function DisplayPanel() {
  return (
    <section className="ml-[6px] flex w-[1339px] flex-col border-x border-[#6a6d6f]">
      <div className="flex h-[53px] border-b border-[#9a9a9a] bg-linear-to-b from-[#4d4e51] to-[#403f41]">
        <div className="mt-px flex w-[124px] items-center border-b-4 border-[#336f9c] bg-[#262626] pt-[5px]">
          <span className="ml-[6px] flex size-9 items-center justify-center rounded-md bg-white">
            <span className="size-[19px] rounded-[3px] bg-[#4a6094]" />
          </span>
          <Fit className="ml-[7px] w-[36px] text-[17px] text-[#ececec]">map</Fit>
          <Cross className="ml-[13px]" />
        </div>
        <span className="ml-[1087px] mt-[3px] flex h-6 w-[51px] items-center justify-center gap-[12px] bg-[#515658]">
          <MenuIcon />
          <svg viewBox="0 0 14 14" className="size-[14px]" fill="#f4f4f4">
            <path d="M1.500 0h11L7 8zM1 11h12v2.500H1z" />
          </svg>
        </span>
        <MinIcon className="ml-[9px] mt-3" />
        <MaxIcon className="ml-[20px] mt-3" />
      </div>
      <div className="grid h-[814px] grid-cols-1 bg-white">
        <FloorMap />
        <MapToolbar />
      </div>
    </section>
  );
}

function StatusBar() {
  return (
    <footer className="flex h-[37px] items-center pl-[1264px] pt-[2px]">
      <Grip />
      <div className="ml-[3px] flex h-[33px] w-[220px] border border-[#d8d8d8] border-t-[#b0b0b0] text-[17px] text-[#ececec]">
        <span className="w-[35px] bg-[#a0a0a0]" />
        <Fit className="ml-[3px] mt-1 w-[121px]">736M of 4096M</Fit>
        <span className="ml-[34px] w-px bg-[#d8d8d8]" />
        <svg viewBox="0 0 20 24" className="ml-[2px] mt-1 h-6 w-5">
          <path d="M1 4h18M7 3V1.500h6V3" fill="none" stroke="#6683b0" strokeWidth="1.800" />
          <path d="M3 6h14v14q0 3-3 3H6q-3 0-3-3z" fill="#b4cbe8" stroke="#6f8fbd" strokeWidth="1.500" />
          <path d="M7.500 7v14M12.500 7v14" stroke="#5f7fb0" strokeWidth="1.600" />
        </svg>
      </div>
      <Grip className="ml-px" />
    </footer>
  );
}

export default function App() {
  return (
    <div className="h-[1018px] w-[1920px] overflow-hidden bg-[#515658] font-['Noto_Sans',sans-serif]">
      <header className="bg-white">
        <TitleBar />
      </header>
      <MainToolbar />
      <main className="flex h-[868px] w-[1920px] bg-white">
        <div className="flex w-[575px] flex-col">
          <ParametersPanel />
          <ConsolePanel />
        </div>
        <DisplayPanel />
      </main>
      <StatusBar />
    </div>
  );
}
